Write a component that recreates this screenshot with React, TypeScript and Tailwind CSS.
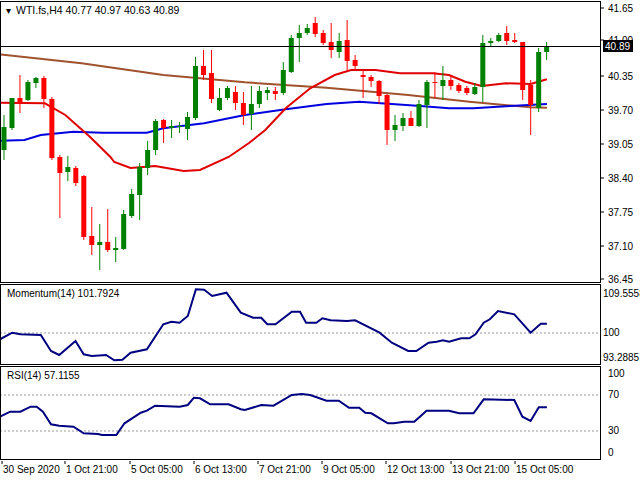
import React from "react";

type C = [string, number, number, number, number];
const candles: C[] = [
  ["g",127,150,115,160],["g",98,128,98,130],["r",98,103,75,113],["g",82,100,80,101],["g",78,83,77,88],
  ["r",78,99,76,108],["r",99,158,97,160],["r",157,173,155,218],["g",167,172,156,181],["r",168,183,166,186],
  ["r",176,237,175,240],["r",236,245,207,255],["g",242,245,224,270],["r",242,250,209,252],["g",248,250,237,262],
  ["g",214,249,210,250],["g",194,216,189,218],["g",167,195,163,220],["g",150,168,141,175],["g",121,150,119,155],
  ["r",120,128,119,143],["g",126,128,120,138],["g",126,127,122,133],["g",117,129,112,140],["g",66,118,57,120],
  ["r",66,75,50,80],["r",73,99,50,103],["g",98,110,88,111],["g",88,98,86,100],["r",92,103,86,110],
  ["r",103,115,92,125],["g",104,114,86,130],["g",91,104,86,108],["g",90,93,87,100],["r",91,94,87,100],
  ["g",70,93,62,95],["g",38,72,35,73],["g",33,38,25,62],["g",28,33,24,35],["r",23,34,17,37],
  ["r",33,43,30,45],["r",42,50,23,58],["g",41,52,33,58],["r",40,61,20,70],["r",60,66,55,70],
  ["r",75,77,70,98],["r",77,81,75,87],["r",81,96,80,104],["r",95,130,94,145],["g",125,130,115,141],
  ["g",118,126,113,131],["r",118,126,111,126],["g",104,126,100,127],["g",82,105,80,128],["r",82,83,72,98],
  ["g",80,86,66,100],["r",80,86,75,90],["r",85,91,83,93],["r",88,93,86,95],["g",87,94,83,95],
  ["g",43,87,35,102],["g",41,43,38,47],["g",35,41,33,42],["r",33,41,26,45],["r",40,42,33,43],
  ["r",42,90,42,100],["r",85,105,80,135],["g",52,108,48,112],["g",47,52,42,60],
];

const zx = (z: number) => z / 2.45;
const pts = (a: number[][], oy: number, sy: number) =>
  a.map(([x, y]) => `${zx(x).toFixed(1)},${(oy + y / sy).toFixed(1)}`).join(" ");

const brown = [[0,163],[200,190],[400,225],[600,247],[800,263],[1000,285],[1150,305],[1300,322],[1340,323]];
const blue = [[0,422],[60,420],[100,405],[180,395],[250,398],[360,398],[400,385],[500,370],[600,345],[700,328],[800,312],[880,305],[960,312],[1030,318],[1100,325],[1160,325],[1250,318],[1340,312]];
const red: number[][] = [[0,308],[110,310],[160,345],[220,410],[270,470],[280,486],[320,504],[380,498],[450,513],[490,510],[560,471],[610,429],[650,390],[700,325],[760,265],[820,225],[860,210],[920,210],[980,220],[1060,220],[1100,225],[1140,245],[1180,258],[1240,250],[1300,252],[1340,238]];

const mom = [[0,175],[30,155],[50,160],[100,162],[125,210],[145,222],[185,180],[205,220],[225,225],[260,222],[280,238],[300,236],[320,215],[360,205],[400,130],[420,122],[440,125],[460,105],[480,25],[500,26],[520,45],[555,35],[590,95],[620,110],[640,110],[655,130],[675,130],[715,92],[735,92],[750,125],[775,125],[790,112],[810,118],[850,120],[870,118],[930,155],[960,185],[1000,210],[1020,210],[1050,185],[1070,182],[1085,178],[1100,182],[1130,172],[1150,172],[1165,160],[1185,125],[1200,115],[1220,90],[1260,100],[1300,155],[1325,128],[1340,128]];
const rsi = [[0,410],[25,395],[50,395],[75,380],[90,380],[105,395],[125,433],[145,437],[180,440],[205,460],[240,462],[250,465],[285,465],[305,430],[345,398],[360,392],[380,377],[440,380],[460,375],[475,353],[490,355],[515,373],[560,373],[590,388],[600,390],[640,375],[670,377],[715,345],[740,342],[760,345],[800,362],[830,362],[855,383],[880,383],[895,398],[910,400],[950,430],[965,430],[990,425],[1015,425],[1045,392],[1100,392],[1125,400],[1160,400],[1185,358],[1260,360],[1280,410],[1300,423],[1320,382],[1340,382]];

const font = { fontFamily: "'Liberation Sans', Arial, sans-serif" };
const times: [string, number][] = [["30 Sep 2020",2],["1 Oct 21:00",65],["5 Oct 05:00",130],["6 Oct 13:00",194],["7 Oct 21:00",258],["9 Oct 05:00",322],["12 Oct 13:00",386],["13 Oct 21:00",451],["15 Oct 05:00",515]];

export default function App() {
  return (
    <div className="w-[640px] h-[480px] bg-white overflow-hidden pt-[1px] flex flex-col gap-[1px] text-[10px] text-black" style={font}>
      <div className="flex h-[282px] shrink-0">
        <div className="w-[601px] border border-black">
          <svg width="599" height="280" viewBox="1 2 599 280" className="block">
            <text x="6" y="14" fontSize="10">▾</text>
            <text x="16" y="14" fontSize="10.5">WTI.fs,H4  40.77 40.97 40.63 40.89</text>
            <polyline points={pts(brown, 0, 3)} fill="none" stroke="#a0522d" strokeWidth="2" />
            <polyline points={pts(blue, 0, 3)} fill="none" stroke="#0000e0" strokeWidth="2" />
            <polyline points={pts(red, 0, 3)} fill="none" stroke="#e00000" strokeWidth="2" />
            {candles.map(([t, a, b, h, l], i) => {
              const x = 4 + i * 7.98;
              const col = t === "g" ? "#008000" : "#ff0000";
              return (
                <g key={i}>
                  <line x1={x} x2={x} y1={h} y2={l} stroke={col} strokeWidth="1" />
                  <rect x={x - 2.5} y={a} width="5" height={Math.max(1, b - a)} fill={col} />
                </g>
              );
            })}
            <line x1="0" x2="600" y1="46.5" y2="46.5" stroke="#000" strokeWidth="1" />
          </svg>
        </div>
        <svg width="39" height="282" viewBox="601 1 39 282" className="block">
          {[["41.65",8],["41.00",40],["40.35",76],["39.70",110],["39.05",144],["38.40",178],["37.75",212],["37.10",246],["36.45",279]].map(([t, y]) => (
            <g key={t as string}>
              <line x1="601" x2="604" y1={y as number} y2={y as number} stroke="#000" />
              <text x="608" y={(y as number) + 3.5} fontSize="10">{t}</text>
            </g>
          ))}
          <rect x="603" y="40" width="30" height="12" fill="#000" />
          <text x="605" y="50" fontSize="10" fill="#fff">40.89</text>
        </svg>
      </div>
      <div className="flex h-[81px] shrink-0">
        <div className="w-[601px] border border-black">
          <svg width="599" height="79" viewBox="1 284 599 79" className="block">
            <line x1="0" x2="600" y1="332" y2="332" stroke="#999" strokeDasharray="2 2" />
            <text x="7" y="296" fontSize="10">Momentum(14) 101.7924</text>
            <polyline points={pts(mom, 280, 3)} fill="none" stroke="#000080" strokeWidth="2" />
          </svg>
        </div>
        <svg width="39" height="81" viewBox="601 283 39 81" className="block">
          <text x="603" y="296" fontSize="10">109.5558</text>
          <text x="603" y="335" fontSize="10">100</text>
          <text x="603" y="360" fontSize="10">93.2885</text>
        </svg>
      </div>
      <div className="flex h-[94px] shrink-0">
        <div className="w-[601px] border border-black">
          <svg width="599" height="92" viewBox="1 367 599 92" className="block">
            <line x1="0" x2="600" y1="395" y2="395" stroke="#999" strokeDasharray="2 2" />
            <line x1="0" x2="600" y1="431" y2="431" stroke="#999" strokeDasharray="2 2" />
            <text x="7" y="379" fontSize="10">RSI(14) 57.1155</text>
            <polyline points={pts(rsi, 280, 3)} fill="none" stroke="#000080" strokeWidth="2" />
          </svg>
        </div>
        <svg width="39" height="94" viewBox="601 366 39 94" className="block">
          <text x="608" y="377" fontSize="10">100</text>
          <text x="608" y="398" fontSize="10">70</text>
          <text x="608" y="434" fontSize="10">30</text>
          <text x="608" y="456" fontSize="10">0</text>
        </svg>
      </div>
      <svg width="640" height="18" viewBox="0 460 640 18" className="block shrink-0">
        {times.map(([t, x]) => (
          <g key={t}>
            <line x1={x} x2={x} y1="460" y2="463" stroke="#000" />
            <text x={x + 1} y="472" fontSize="10">{t}</text>
          </g>
        ))}
      </svg>
    </div>
  );
}
